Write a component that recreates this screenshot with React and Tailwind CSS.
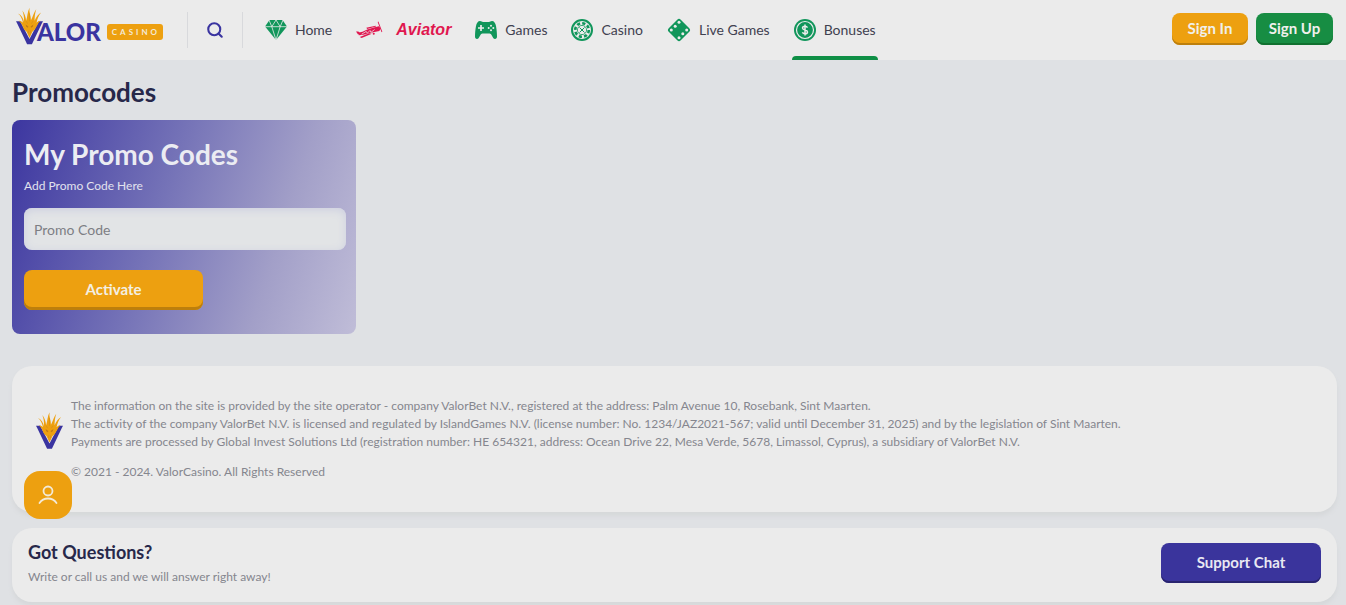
import { Search } from 'lucide-react';

function Emblem({ className }) {
  return (
    <svg viewBox="0 0 28 38" className={className} aria-hidden="true">
      <path d="M0 14h4.500l1 2.500 8.500 16 8.500-16 1-2.500H28l-1.500 3L16.500 38h-5L1.500 17z" fill="#3a34a0" />
      <path
        d="M14 31.500 11 25 8.500 22.500C6.500 19 6.500 17 3 13.500c2.200.2 3.300 1 4.200 2.200C6.300 11 5 8.500 2 6c3.500 1.500 5.300 4.500 6.300 8.500.2-4.500-.3-8-1.800-11.500C9 6 10 9.500 10.500 13.500 12 9 11.700 4.500 14 0c-.8 4.500 1.700 8.500 1.500 13C17.500 9 18.500 5 21 1.500c-1.300 4-1.800 8-1.700 12C21 9.500 23 7 26 5c-2.800 3.500-3.800 6.500-4.700 10.700 1-1.200 2.200-2 4.200-2.200-3.300 3-3.500 5.500-6 9L17 25z"
        fill="#eda010"
      />
      <path d="m10 17.500 2.800 2-.4 1.300-1.800-1zM18 17.500l-2.800 2 .4 1.300 1.800-1z" fill="#c07a16" />
      <path d="M14 6v8M10.500 14l1.500 2.500M17.500 14 16 16.500M13 24v3M15 24v3" stroke="#cf8a1c" strokeWidth="0.600" />
    </svg>
  );
}

function DiamondIcon() {
  return (
    <svg viewBox="0 0 22 20" className="h-5 w-[22px]" aria-hidden="true">
      <path d="M4.500 0h13L22 6.500 11 20 0 6.500z" fill="#11965b" />
      <path d="M0 6.700h22M6.800 6.700 11 20l4.200-13.300M11 0 6.800 6.700 4 0M11 0l4.200 6.700L18 0" fill="none" stroke="#ebecec" strokeWidth="0.800" />
    </svg>
  );
}

function PlaneIcon() {
  return (
    <svg viewBox="0 0 30 18" className="h-[18px] w-[28px]" aria-hidden="true">
      <g fill="#e0174f">
        <path d="M2 12 7 11l5-2.500 7-2.300 5.500-1.200 2 2.500-1.500 2.500L16 12l-8 2-5 .5z" />
        <path d="M0 10.500h2.500l2 2-2.500 1zM4 16.500l10-4 3 .5L6 17.500z" />
        <path d="m24 0 4.200 11-.8.500L23.200.500zM11 6.500l10-2 .5.800L12 8z" />
        <circle cx="19" cy="13" r="1.100" />
      </g>
      <path d="m6 13.500 5-3 1 2 3-3 1 2 4-3" fill="none" stroke="#ebecec" strokeWidth="0.800" />
    </svg>
  );
}

function GamepadIcon() {
  return (
    <svg viewBox="0 0 22 18" className="h-[18px] w-[22px]" aria-hidden="true">
      <path d="M5 0c1.500 0 2 1 3 1h6c1 0 1.500-1 3-1 2 0 3.500 2 4 5 .7 4 1 7 1 10.500 0 1.500-.7 2.500-2 2.500-2.500 0-3-5.500-5.500-5.500h-7C5 12.500 4.500 18 2 18c-1.300 0-2-1-2-2.500C0 12 .3 9 1 5c.5-3 2-5 4-5z" fill="#11965b" />
      <path d="M6 4v6M3 7h6" stroke="#ebecec" strokeWidth="1.700" />
      <g fill="#ebecec">
        <circle cx="16" cy="4.700" r="1" />
        <circle cx="16" cy="9.300" r="1" />
        <circle cx="13.700" cy="7" r="1" />
        <circle cx="18.300" cy="7" r="1" />
      </g>
    </svg>
  );
}

function ChipIcon() {
  return (
    <svg viewBox="0 0 22 22" className="size-[22px]" fill="none" aria-hidden="true">
      <circle cx="11" cy="11" r="10" stroke="#11965b" strokeWidth="2" />
      <circle cx="11" cy="11" r="6.800" stroke="#11965b" strokeWidth="2.600" strokeDasharray="3.200 2.140" />
      <circle cx="11" cy="11" r="4.600" stroke="#11965b" strokeWidth="0.800" />
      <path d="m8.500 8.500 5 5M13.500 8.500l-5 5" stroke="#11965b" strokeWidth="1" />
    </svg>
  );
}

function DiceIcon() {
  return (
    <svg viewBox="0 0 24 24" className="size-6" aria-hidden="true">
      <rect x="3.500" y="3.500" width="17" height="17" rx="2.500" transform="rotate(45 12 12)" fill="#11965b" />
      <g fill="#ebecec">
        <circle cx="12" cy="4.300" r="1.500" />
        <circle cx="8.200" cy="8.200" r="1.500" />
        <circle cx="4.300" cy="12" r="1.500" />
        <circle cx="19.700" cy="12" r="1.500" />
        <circle cx="15.800" cy="15.800" r="1.500" />
        <circle cx="12" cy="19.700" r="1.500" />
      </g>
    </svg>
  );
}

function CoinIcon() {
  return (
    <svg viewBox="0 0 22 22" className="size-[22px]" fill="none" aria-hidden="true">
      <circle cx="11" cy="11" r="11" fill="#11965b" />
      <circle cx="11" cy="11" r="8.500" stroke="#ebecec" strokeWidth="1.200" />
      <path d="M13.500 8.600C13 7.700 12.100 7.300 11 7.300c-1.500 0-2.500.7-2.500 1.800 0 2.500 5 1.300 5 3.900 0 1.100-1 1.800-2.500 1.800-1.200 0-2.200-.5-2.600-1.500M11 5.500v11" stroke="#ebecec" strokeWidth="1.500" />
    </svg>
  );
}

const links = [
  { label: 'Home', Icon: DiamondIcon },
  { label: 'Aviator', Icon: PlaneIcon, brand: true },
  { label: 'Games', Icon: GamepadIcon },
  { label: 'Casino', Icon: ChipIcon },
  { label: 'Live Games', Icon: DiceIcon },
  { label: 'Bonuses', Icon: CoinIcon, active: true },
];

function NavLink({ label, Icon, brand, active }) {
  return (
    <a href="#" aria-current={active ? 'page' : undefined} className="flex h-full flex-col px-0.5">
      <span className={brand ? 'flex flex-1 items-center gap-3 pt-1' : 'flex flex-1 items-center gap-2 pt-1'}>
        <Icon />
        {brand ? (
          <span className="font-['Liberation_Sans',sans-serif] text-base leading-6 font-bold text-[#e0174f] italic">{label}</span>
        ) : (
          <span className="text-sm leading-5">{label}</span>
        )}
      </span>
      <span className={active ? '-mx-0.5 h-1 rounded-t-sm bg-[#0f8f46]' : 'h-1'} />
    </a>
  );
}

export default function App() {
  return (
    <div className="min-h-screen bg-[#dfe1e4] font-['Lato',sans-serif] text-[#3f4150]">
      <header className="flex h-15 items-center bg-[#ebebeb] pr-[13px] pl-4">
        <a href="#" aria-label="Valor Casino" className="flex items-center pt-1">
          <Emblem className="mb-3 h-[38px] w-[27px]" />
          <span className="-ml-1.5 text-2xl leading-7 font-black text-[#3a34a0]">ALOR</span>
          <span className="ml-1.5 flex h-4 w-14 items-center justify-center rounded-[3px] bg-[#eda010] pl-0.5 text-[8px] font-bold tracking-[3px] text-[#f3ead8]">CASINO</span>
        </a>
        <div className="ml-6 flex h-9 w-14 items-center justify-center border-x border-[#d8d9dc]">
          <button type="button" aria-label="Search">
            <Search size={18} strokeWidth={2.8} color="#3a34a0" />
          </button>
        </div>
        <nav className="ml-5 flex h-full gap-5">
          {links.map((link) => (
            <NavLink key={link.label} {...link} />
          ))}
        </nav>
        <div className="ml-auto flex gap-2 pb-0.5 text-[15px] font-bold text-[#f0f0ec]">
          <button type="button" className="h-8 w-19 rounded-lg bg-[#eda010] pb-0.5 shadow-[inset_0_-2px_0_#bd7f0c]">Sign In</button>
          <button type="button" className="h-8 w-[77px] rounded-lg bg-[#178d43] pb-0.5 shadow-[inset_0_-2px_0_#10702f]">Sign Up</button>
        </div>
      </header>

      <main className="px-3 pt-4">
        <h1 className="text-[26px] leading-8 font-bold text-[#27284a]">Promocodes</h1>
        <section className="mt-3 w-[344px] max-w-full rounded-lg bg-linear-[108deg,#3c36a0_0%,#7472b7_42%,#a29fc8_74%,#c0bdd8_100%] pt-3.5 pr-2.5 pb-6 pl-3">
          <h2 className="text-[28px] leading-10 font-bold text-[#ebecf2]">My Promo Codes</h2>
          <label htmlFor="promo" className="mt-0.5 block text-xs leading-5 text-[#e2e2ee]">Add Promo Code Here</label>
          <input
            id="promo"
            type="text"
            placeholder="Promo Code"
            className="mt-3 block h-[42px] w-full rounded-lg bg-[#e2e4e6] px-2.5 text-sm text-[#3f4150] shadow-[inset_0_2px_8px_#cdcfe0] outline-none placeholder:text-[#7d7e84]"
          />
          <button type="button" className="mt-5 block h-10 w-[179px] rounded-lg bg-[#eda010] pb-0.5 text-[15px] font-bold text-[#f3efe2] shadow-[inset_0_-3px_0_#bd7f0c]">Activate</button>
        </section>
      </main>

      <footer className="mt-8 mr-[9px] ml-3 flex flex-col gap-4">
        <section className="flex gap-2 rounded-[20px] bg-[#ebebeb] pt-[31px] pr-6 pb-[31px] pl-6 shadow-[0_4px_4px_#d6d8da]">
          <Emblem className="mt-3.5 h-[39px] w-[27px] shrink-0" />
          <div className="text-xs leading-[18px] text-[#85868e]">
            <p>The information on the site is provided by the site operator - company ValorBet N.V., registered at the address: Palm Avenue 10, Rosebank, Sint Maarten.</p>
            <p>The activity of the company ValorBet N.V. is licensed and regulated by IslandGames N.V. (license number: No. 1234/JAZ2021-567; valid until December 31, 2025) and by the legislation of Sint Maarten.</p>
            <p>Payments are processed by Global Invest Solutions Ltd (registration number: HE 654321, address: Ocean Drive 22, Mesa Verde, 5678, Limassol, Cyprus), a subsidiary of ValorBet N.V.</p>
            <p className="mt-3">© 2021 - 2024. ValorCasino. All Rights Reserved</p>
          </div>
        </section>
        <section className="flex items-center justify-between rounded-[20px] bg-[#ebebeb] px-4 pt-3 pb-4 shadow-[0_4px_4px_#d6d8da]">
          <div>
            <h2 className="text-lg leading-6 font-bold text-[#27284a]">Got Questions?</h2>
            <p className="mt-1 text-xs leading-[18px] text-[#85868e]">Write or call us and we will answer right away!</p>
          </div>
          <button type="button" className="h-10 w-40 rounded-lg bg-[#3a349c] pb-0.5 text-[15px] font-bold text-[#e8e8f2] shadow-[inset_0_-2px_0_#29246f]">Support Chat</button>
        </section>
      </footer>

      <button type="button" aria-label="Account" className="fixed bottom-[86px] left-6 flex size-12 items-center justify-center rounded-2xl bg-[#eda010]">
        <svg viewBox="0 0 20 20" className="size-5" fill="none" stroke="#f3ead8" strokeWidth="1.800" strokeLinecap="round" aria-hidden="true">
          <circle cx="10" cy="6" r="4.500" />
          <path d="M1.500 18c2-3 5-4.500 8.500-4.500s6.500 1.500 8.500 4.500" />
        </svg>
      </button>
    </div>
  );
}
